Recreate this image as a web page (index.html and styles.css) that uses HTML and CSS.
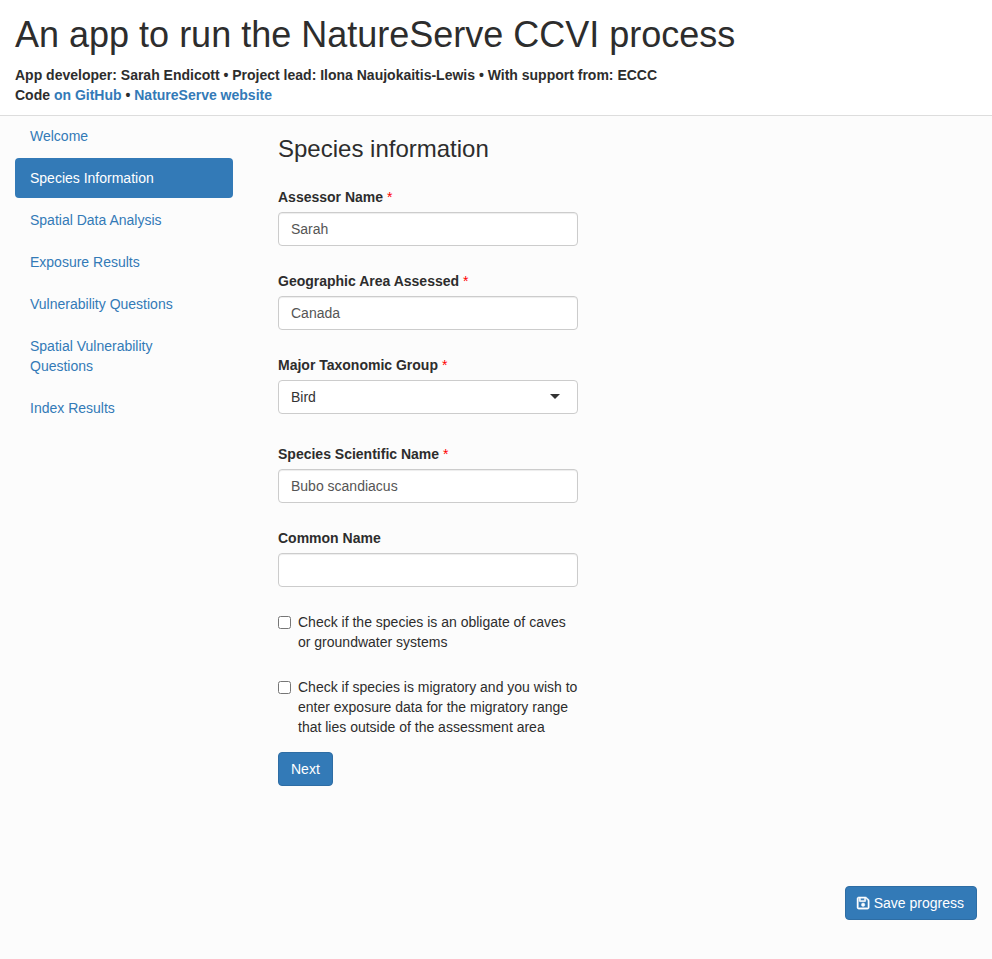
FILE: index.html
```html
<!DOCTYPE html>
<html lang="en">
<head>
<meta charset="utf-8">
<title>NatureServe CCVI</title>
<link rel="stylesheet" href="styles.css">
</head>
<body>
<header class="header">
  <h1>An app to run the NatureServe CCVI process</h1>
  <p class="credits">App developer: Sarah Endicott • Project lead: Ilona Naujokaitis-Lewis • With support from: ECCC<br>Code <a href="#">on GitHub</a> • <a href="#">NatureServe website</a></p>
</header>
<div class="layout">
  <nav class="nav">
    <a href="#">Welcome</a>
    <a href="#" class="active">Species Information</a>
    <a href="#">Spatial Data Analysis</a>
    <a href="#">Exposure Results</a>
    <a href="#">Vulnerability Questions</a>
    <a href="#">Spatial Vulnerability Questions</a>
    <a href="#">Index Results</a>
  </nav>
  <main class="main">
    <h3>Species information</h3>
    <div class="group">
      <label for="assessor">Assessor Name <span class="star">*</span></label>
      <input class="control" id="assessor" type="text" value="Sarah">
    </div>
    <div class="group">
      <label for="area">Geographic Area Assessed <span class="star">*</span></label>
      <input class="control" id="area" type="text" value="Canada">
    </div>
    <div class="group group-select">
      <label>Major Taxonomic Group <span class="star">*</span></label>
      <div class="control select"><span>Bird</span><i class="caret"></i></div>
    </div>
    <div class="group">
      <label for="species">Species Scientific Name <span class="star">*</span></label>
      <input class="control" id="species" type="text" value="Bubo scandiacus">
    </div>
    <div class="group">
      <label for="common">Common Name</label>
      <input class="control" id="common" type="text">
    </div>
    <label class="check"><input type="checkbox"><span>Check if the species is an obligate of caves or groundwater systems</span></label>
    <label class="check"><input type="checkbox"><span>Check if species is migratory and you wish to enter exposure data for the migratory range that lies outside of the assessment area</span></label>
    <button class="btn btn-next">Next</button>
  </main>
</div>
<footer class="footer">
  <button class="btn"><svg class="save" viewBox="0 0 448 512"><path fill="currentColor" stroke="currentColor" stroke-width="16" fill-rule="evenodd" d="M48 96v320c0 8.800 7.200 16 16 16h320c8.800 0 16-7.200 16-16V170.500c0-4.200-1.700-8.300-4.700-11.300l33.900-33.900c12 12 18.700 28.300 18.700 45.300V416c0 35.300-28.700 64-64 64H64c-35.300 0-64-28.700-64-64V96c0-35.300 28.700-64 64-64h245.500c17 0 33.300 6.700 45.300 18.700l74.500 74.500-33.900 33.900L320.800 84.700c-.3-.3-.5-.5-.8-.8V184c0 13.300-10.700 24-24 24H104c-13.300 0-24-10.700-24-24V80H64c-8.800 0-16 7.200-16 16zm80-16v80h144V80zm32 240a64 64 0 1 1 128 0 64 64 0 1 1-128 0z"/></svg> Save progress</button>
</footer>
</body>
</html>
```

FILE: styles.css
```css
* { box-sizing: border-box; }
body {
  margin: 0;
  min-height: 959px;
  background: #fcfcfc;
  color: #2d2d2d;
  font: 14px/20px "Liberation Sans", Arial, sans-serif;
}
a { color: #337ab7; text-decoration: none; }
.header {
  height: 116px;
  padding: 15px 15px 0;
  background: #fff;
  border-bottom: 1px solid #ddd;
}
h1 { margin: 0 0 10px; font-size: 36px; line-height: 40px; font-weight: 400; }
.credits { margin: 0; font-weight: 700; }
.layout { display: flex; padding-left: 15px; }
.nav { width: 218px; display: flex; flex-direction: column; gap: 2px; }
.nav a { padding: 10px 15px; border-radius: 4px; }
.nav a.active { background: #337ab7; color: #fff; }
.main { width: 300px; margin-left: 45px; padding-top: 20px; }
h3 { margin: 0 0 25px; font-size: 24px; line-height: 26px; font-weight: 400; }
.group { margin-bottom: 25px; }
.group-select { margin-bottom: 30px; }
.group label { display: block; font-weight: 700; margin-bottom: 5px; }
.star { color: #f00; font-weight: 400; }
.control {
  display: block;
  width: 300px;
  height: 34px;
  padding: 6px 12px;
  border: 1px solid #ccc;
  border-radius: 4px;
  background: #fff;
  color: #555;
  font: inherit;
  box-shadow: inset 0 1px 1px rgba(0, 0, 0, .075);
}
.select { display: flex; justify-content: space-between; color: #333; box-shadow: none; }
.caret {
  width: 0;
  height: 0;
  margin: 7px 5px 0 0;
  border: 5px solid transparent;
  border-top-color: #333;
  border-bottom: 0;
}
.check { display: flex; gap: 7px; margin-bottom: 25px; }
.check input { flex: none; width: 13px; height: 13px; margin: 4px 0 0; }
.btn {
  height: 34px;
  padding: 6px 12px;
  border: 1px solid #2e6da4;
  border-radius: 4px;
  background: #337ab7;
  color: #fff;
  font: inherit;
}
.btn-next { display: block; margin-top: -10px; }
.footer { display: flex; justify-content: flex-end; padding: 100px 15px 0 0; }
.save { width: 12.25px; height: 14px; margin: 0 .5px 0 -.5px; overflow: visible; vertical-align: -1.75px; }
```
